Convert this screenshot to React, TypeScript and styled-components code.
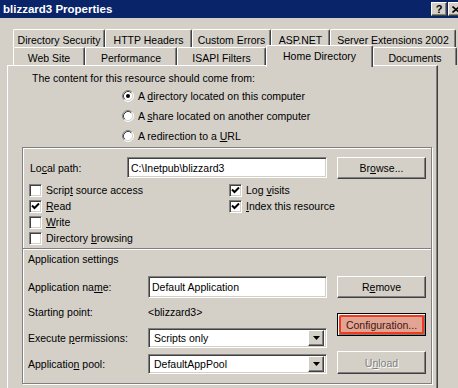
import { FC, ReactNode } from "react";
import styled, { createGlobalStyle, css } from "styled-components";

const GlobalStyle = createGlobalStyle`
    html, body {
        margin: 0;
        padding: 0;
        background: #d4d0c8;
    }

    body {
        font-family: "Liberation Sans", Arial, sans-serif;
        font-size: 10.5px;
        color: #000;
    }

    * {
        box-sizing: border-box;
    }
`;

type TabDef = {
    label: string;
    width: number;
    selected?: boolean;
};

const backTabs: TabDef[] = [
    { label: "Directory Security", width: 92 },
    { label: "HTTP Headers", width: 87 },
    { label: "Custom Errors", width: 79 },
    { label: "ASP.NET", width: 59 },
    { label: "Server Extensions 2002", width: 126 },
];

const frontTabs: TabDef[] = [
    { label: "Web Site", width: 72 },
    { label: "Performance", width: 92 },
    { label: "ISAPI Filters", width: 89 },
    { label: "Home Directory", width: 107, selected: true },
    { label: "Documents", width: 84 },
];

const raised = css`
    background: #d4d0c8;
    border: 1px solid;
    border-color: #fff #404040 #404040 #fff;
    box-shadow: inset -1px -1px 0 #808080;
`;

const sunken = css`
    background: #fff;
    border: 1px solid;
    border-color: #808080 #fff #fff #808080;
    box-shadow: inset 1px 1px 0 #404040, inset -1px -1px 0 #d4d0c8;
`;

const RadioMark: FC<{ checked?: boolean }> = ({ checked }) => (
    <svg width="12" height="12" viewBox="0 0 12 12">
        <circle cx="6" cy="6" r="5" fill="#fff" />
        <path d="M2.11 9.89 A5.5 5.5 0 0 1 9.89 2.11" stroke="#808080" fill="none" />
        <path d="M9.89 2.11 A5.5 5.5 0 0 1 2.11 9.89" stroke="#fff" fill="none" />
        <path d="M2.82 9.18 A4.5 4.5 0 0 1 9.18 2.82" stroke="#404040" fill="none" />
        <path d="M9.18 2.82 A4.5 4.5 0 0 1 2.82 9.18" stroke="#d4d0c8" fill="none" />
        {checked && <circle cx="6" cy="6" r="2" fill="#000" />}
    </svg>
);

const CheckMark: FC = () => (
    <svg width="9" height="9" viewBox="0 0 9 9">
        <path d="M1 3.5 L3.5 6 L8 1.5" stroke="#000" strokeWidth="2" fill="none" />
    </svg>
);

const DropArrow: FC = () => (
    <svg width="7" height="4" viewBox="0 0 7 4">
        <path d="M0 0 H7 L3.5 4 Z" fill="#000" />
    </svg>
);

const CloseGlyph: FC = () => (
    <svg width="8" height="7" viewBox="0 0 8 7">
        <path d="M0.5 0.5 L7.5 6.5 M7.5 0.5 L0.5 6.5" stroke="#000" strokeWidth="1.6" />
    </svg>
);

const Radio: FC<{ checked?: boolean; children: ReactNode }> = ({ checked, children }) => (
    <RadioRow>
        <RadioMark checked={checked} />
        <span>{children}</span>
    </RadioRow>
);

const Check: FC<{ checked?: boolean; children: ReactNode }> = ({ checked, children }) => (
    <CheckRow>
        <CheckBox>{checked && <CheckMark />}</CheckBox>
        <span>{children}</span>
    </CheckRow>
);

const Select: FC<{ value: string }> = ({ value }) => (
    <SelectBox>
        <FieldText>{value}</FieldText>
        <DropButton>
            <DropArrow />
        </DropButton>
    </SelectBox>
);

export default function App() {
    return <Window>
        <GlobalStyle />
        <TitleBar>
            <Title>blizzard3 Properties</Title>
            <Caps>
                <CapButton>?</CapButton>
                <CapButton><CloseGlyph /></CapButton>
            </Caps>
        </TitleBar>

        <Client>
            <TabRow>
                {backTabs.map(t => <Tab key={t.label} $width={t.width}>{t.label}</Tab>)}
            </TabRow>
            <TabRow>
                {frontTabs.map(t =>
                    <Tab key={t.label} $width={t.width} $selected={t.selected}>{t.label}</Tab>
                )}
            </TabRow>

            <Panel>
                <Intro>The content for this resource should come from:</Intro>
                <RadioList>
                    <Radio checked>A <Mn>d</Mn>irectory located on this computer</Radio>
                    <Radio>A <Mn>s</Mn>hare located on another computer</Radio>
                    <Radio>A redirection to a <Mn>U</Mn>RL</Radio>
                </RadioList>

                <Group>
                    <TopSection>
                        <PathRow>
                            <PathLabel>Lo<Mn>c</Mn>al path:</PathLabel>
                            <PathInput>
                                <FieldText>C:\Inetpub\blizzard3</FieldText>
                            </PathInput>
                            <Button>Br<Mn>o</Mn>wse...</Button>
                        </PathRow>
                        <CheckGrid>
                            <Check>Scrip<Mn>t</Mn> source access</Check>
                            <Check checked>Log <Mn>v</Mn>isits</Check>
                            <Check checked><Mn>R</Mn>ead</Check>
                            <Check checked><Mn>I</Mn>ndex this resource</Check>
                            <Check><Mn>W</Mn>rite</Check>
                            <span />
                            <Check>Directory <Mn>b</Mn>rowsing</Check>
                        </CheckGrid>
                    </TopSection>

                    <Divider />

                    <BottomSection>
                        <Heading>Application settings</Heading>
                        <Columns>
                            <FieldColumn>
                                <FieldRow $height={22}>
                                    <FieldLabel>Application na<Mn>m</Mn>e:</FieldLabel>
                                    <NameInput>
                                        <FieldText>Default Application</FieldText>
                                    </NameInput>
                                </FieldRow>
                                <FieldRow $height={28}>
                                    <FieldLabel>Starting point:</FieldLabel>
                                    <StaticValue>&lt;blizzard3&gt;</StaticValue>
                                </FieldRow>
                                <FieldRow $height={24}>
                                    <FieldLabel>Execute <Mn>p</Mn>ermissions:</FieldLabel>
                                    <Select value="Scripts only" />
                                </FieldRow>
                                <FieldRow $height={28}>
                                    <FieldLabel>Applicatio<Mn>n</Mn> pool:</FieldLabel>
                                    <Select value="DefaultAppPool" />
                                </FieldRow>
                            </FieldColumn>
                            <ButtonColumn>
                                <Button>R<Mn>e</Mn>move</Button>
                                <DefaultButton>
                                    <FocusMark>Configuration...</FocusMark>
                                </DefaultButton>
                                <Button $disabled>U<Mn>n</Mn>load</Button>
                            </ButtonColumn>
                        </Columns>
                    </BottomSection>
                </Group>
            </Panel>
        </Client>
    </Window>;
}

const Window = styled.div`
    width: 458px;
    height: 388px;
    overflow: hidden;
    background: #d4d0c8;
    display: flex;
    flex-flow: column nowrap;
`;

const TitleBar = styled.div`
    height: 19px;
    flex-shrink: 0;
    background: #0a246a;
    border-bottom: 1px solid #d4d0c8;
    display: flex;
    flex-flow: row nowrap;
    justify-content: space-between;
    align-items: center;
    padding-left: 3px;
`;

const Title = styled.span`
    color: #fff;
    font-weight: bold;
    font-size: 11.5px;
    white-space: nowrap;
`;

const Caps = styled.div`
    display: flex;
    flex-flow: row nowrap;
    gap: 1px;
    margin-right: -6px;
    align-self: flex-start;
    margin-top: 2px;
`;

const CapButton = styled.div`
    ${raised};
    width: 16px;
    height: 14px;
    display: flex;
    align-items: center;
    justify-content: center;
    font-weight: bold;
    font-size: 11px;
    line-height: 1;
`;

const Client = styled.div`
    padding-top: 10px;
    display: flex;
    flex-flow: column nowrap;
`;

const TabRow = styled.div`
    height: 18px;
    padding-left: 13px;
    display: flex;
    flex-flow: row nowrap;
    align-items: flex-start;
`;

const Tab = styled.div<{ $width: number; $selected?: boolean }>`
    width: ${p => p.$width}px;
    height: 18px;
    flex-shrink: 0;
    background: #d4d0c8;
    border-top: 1px solid #fff;
    border-left: 1px solid #fff;
    border-right: 1px solid #404040;
    border-radius: 2px 2px 0 0;
    box-shadow: inset -1px 0 0 #808080;
    display: flex;
    align-items: center;
    justify-content: center;
    padding-top: 2px;
    white-space: nowrap;

    ${p => p.$selected && css`
        height: 22px;
        margin-top: -2px;
        padding-top: 0;
        padding-bottom: 2px;
        position: relative;
        z-index: 1;
    `}
`;

const Panel = styled.div`
    margin-left: 7px;
    width: 431px;
    height: 323px;
    border-top: 1px solid #fff;
    border-left: 1px solid #fff;
    border-right: 1px solid #404040;
    box-shadow: inset -1px 0 0 #808080;
    display: flex;
    flex-flow: column nowrap;
`;

const Intro = styled.div`
    margin: 6px 0 0 24px;
    line-height: 13px;
    white-space: nowrap;
`;

const RadioList = styled.div`
    margin: 1px 0 0 114px;
    display: flex;
    flex-flow: column nowrap;
`;

const RadioRow = styled.div`
    height: 20px;
    display: flex;
    flex-flow: row nowrap;
    align-items: center;
    gap: 4px;
    white-space: nowrap;
`;

const Mn = styled.span`
    text-decoration: underline;
`;

const Group = styled.div`
    margin: 1px 0 0 14px;
    width: 410px;
    height: 237px;
    border: 1px solid #808080;
    box-shadow: 1px 1px 0 #fff, inset 1px 1px 0 #fff;
    display: flex;
    flex-flow: column nowrap;
`;

const TopSection = styled.div`
    padding: 9px 4px 0 6px;
`;

const PathRow = styled.div`
    height: 22px;
    display: flex;
    flex-flow: row nowrap;
    align-items: center;
`;

const PathLabel = styled.span`
    width: 98px;
    padding-left: 1px;
    white-space: nowrap;
`;

const FieldText = styled.span`
    padding-left: 3px;
    white-space: nowrap;
    overflow: hidden;
    flex: 1;
`;

const PathInput = styled.div`
    ${sunken};
    width: 200px;
    height: 21px;
    display: flex;
    align-items: center;
    margin-top: -1px;
`;

const Button = styled.div<{ $disabled?: boolean }>`
    ${raised};
    width: 89px;
    height: 22px;
    flex-shrink: 0;
    margin-left: 10px;
    display: flex;
    align-items: center;
    justify-content: center;
    white-space: nowrap;

    ${p => p.$disabled && css`
        color: #808080;
        text-shadow: 1px 1px 0 #fff;
    `}
`;

const CheckGrid = styled.div`
    margin-top: 3px;
    display: grid;
    grid-template-columns: 200px 1fr;
    grid-auto-rows: 16px;
`;

const CheckRow = styled.div`
    display: flex;
    flex-flow: row nowrap;
    align-items: center;
    gap: 4px;
    white-space: nowrap;
`;

const CheckBox = styled.div`
    ${sunken};
    width: 13px;
    height: 13px;
    display: flex;
    align-items: center;
    justify-content: center;
`;

const Divider = styled.div`
    margin-top: 2px;
    height: 2px;
    border-top: 1px solid #808080;
    border-bottom: 1px solid #fff;
`;

const BottomSection = styled.div`
    padding: 3px 4px 0 5px;
`;

const Heading = styled.div`
    line-height: 13px;
    white-space: nowrap;
`;

const Columns = styled.div`
    margin-top: 10px;
    display: flex;
    flex-flow: row nowrap;
    align-items: flex-start;
`;

const FieldColumn = styled.div`
    display: flex;
    flex-flow: column nowrap;
`;

const FieldRow = styled.div<{ $height: number }>`
    height: ${p => p.$height}px;
    display: flex;
    flex-flow: row nowrap;
    align-items: center;
`;

const FieldLabel = styled.span`
    width: 120px;
    white-space: nowrap;
`;

const NameInput = styled.div`
    ${sunken};
    width: 179px;
    height: 22px;
    display: flex;
    align-items: center;
`;

const StaticValue = styled.span`
    white-space: nowrap;
`;

const SelectBox = styled.div`
    ${sunken};
    width: 179px;
    height: 20px;
    display: flex;
    flex-flow: row nowrap;
    align-items: center;
    padding: 2px;
`;

const DropButton = styled.div`
    ${raised};
    width: 16px;
    height: 16px;
    flex-shrink: 0;
    display: flex;
    align-items: center;
    justify-content: center;
`;

const ButtonColumn = styled.div`
    display: flex;
    flex-flow: column nowrap;
    gap: 15px;

    & > *:not(:first-child) {
        height: 23px;
    }
`;

const DefaultButton = styled.div`
    width: 89px;
    height: 23px;
    margin-left: 10px;
    border: 1px solid #000;
    display: flex;
    padding: 1px;
    background: #d4d0c8;
    box-shadow: inset 1px 1px 0 #fff, inset -2px -2px 0 #808080;
`;

const FocusMark = styled.span`
    flex: 1;
    border: 2px solid #f23a1c;
    border-radius: 2px;
    background: #e3a493;
    color: #3a1a14;
    display: flex;
    align-items: center;
    justify-content: center;
    white-space: nowrap;
`;
